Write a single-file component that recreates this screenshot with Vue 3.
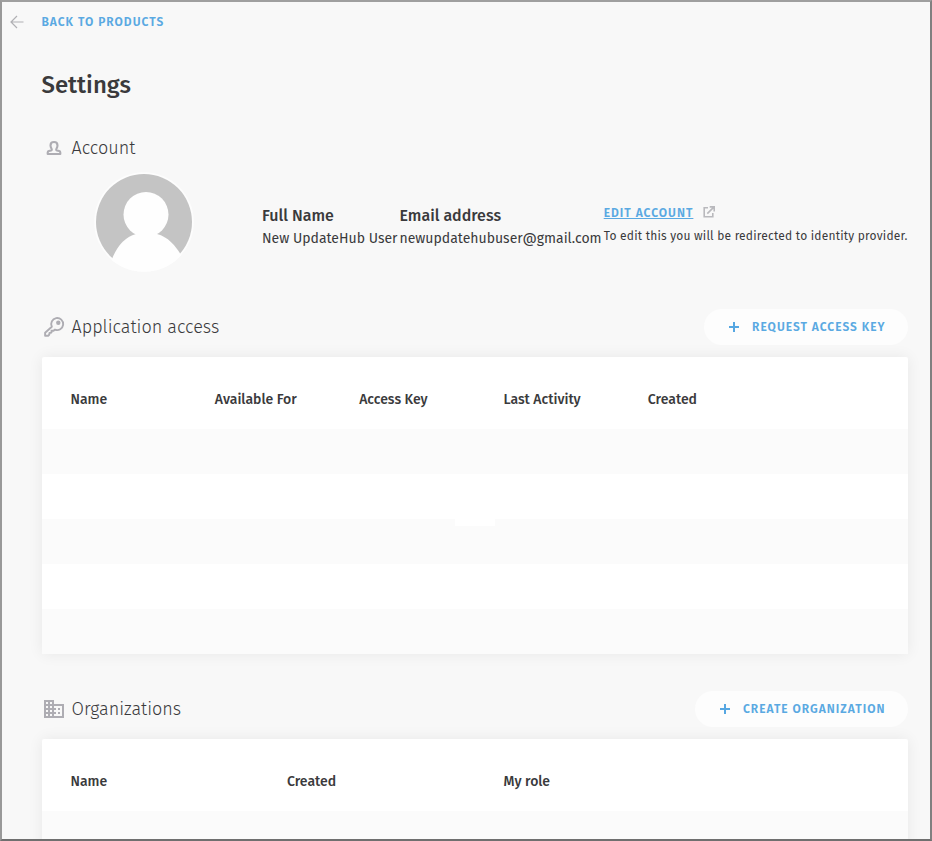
<script setup>
const keyColumns = ['Name', 'Available For', 'Access Key', 'Last Activity', 'Created', '']
const orgColumns = ['Name', 'Created', 'My role', '']
</script>

<template>
  <div class="window">
    <nav class="back">
      <svg class="back-icon" width="14" height="14" viewBox="0 0 14 14">
        <path d="M13.5 7H1M7 1 1 7l6 6" fill="none" stroke="#b0b0b4" stroke-width="1.2" />
      </svg>
      <a class="link">BACK TO PRODUCTS</a>
    </nav>

    <main class="content">
      <h1 class="title">Settings</h1>

      <section class="account">
        <header class="section-head account-head">
          <svg class="section-icon" width="24" height="24" viewBox="0 0 24 24">
            <path
              d="M12 6c2.200 0 3.500 1.400 3.500 3.400 0 1.600-.6 2.600-1.100 3.500-.4.800-.2 1.300.5 1.500l2.300.6c.8.200 1.100.7 1.100 1.400V18H5.700v-1.600c0-.7.3-1.200 1.100-1.400l2.300-.6c.7-.2.9-.7.5-1.500-.5-.9-1.100-1.900-1.100-3.500C8.500 7.400 9.800 6 12 6z"
              fill="none" stroke="#aeadb3" stroke-width="2.100" stroke-linejoin="round"
            />
          </svg>
          <h2>Account</h2>
        </header>
        <div class="profile">
          <svg class="avatar" width="100" height="100" viewBox="0 0 100 100">
            <defs>
              <clipPath id="avatar-clip"><circle cx="50" cy="50" r="49.800" /></clipPath>
            </defs>
            <circle cx="50" cy="50" r="49.800" fill="#fdfdfd" />
            <circle cx="50" cy="50" r="48" fill="#c4c4c4" />
            <g clip-path="url(#avatar-clip)" fill="#fefefe">
              <circle cx="52" cy="42.500" r="22.500" />
              <path d="M42 62h21c11 3 18 11 24 21l2 17H16l2-13c5-13 13-22 24-25z" />
            </g>
          </svg>
          <dl class="field name-field">
            <dt>Full Name</dt>
            <dd>New UpdateHub User</dd>
          </dl>
          <dl class="field email-field">
            <dt>Email address</dt>
            <dd>newupdatehubuser@gmail.com</dd>
          </dl>
          <div class="edit">
            <div class="edit-row">
              <a class="link underlined">EDIT ACCOUNT</a>
              <svg class="external" width="12" height="12" viewBox="0 0 12 12">
                <path d="M5 1.800H1.200v9h8.600V7" fill="none" stroke="#b9b9bd" stroke-width="1.600" />
                <path d="M4.300 7.600l6-6M6.700.9h4.500v4.500" fill="none" stroke="#b9b9bd" stroke-width="1.600" />
              </svg>
            </div>
            <p>To edit this you will be redirected to identity provider.</p>
          </div>
        </div>
      </section>

      <section class="block">
        <header class="section-head">
          <svg class="section-icon" width="24" height="24" viewBox="0 0 24 24">
            <path
              d="M9.800 12.200a6 6 0 1 1 3.100 2.900l-1.300 1.100H9.500v1.900l-2 .4-.3 1.800-1 .9H3.100v-2.900z"
              transform="translate(0 -.5)"
              fill="none" stroke="#aeadb3" stroke-width="1.900" stroke-linejoin="round"
            />
            <circle cx="16.300" cy="7.800" r="2.200" fill="#aeadb3" />
          </svg>
          <h2>Application access</h2>
          <button class="pill">
            <svg width="10" height="10" viewBox="0 0 10 10"><path d="M5 0v10M0 5h10" stroke="#56a7e2" stroke-width="2" /></svg>
            <span>REQUEST ACCESS KEY</span>
          </button>
        </header>
        <div class="card">
          <div class="table-head six">
            <span v-for="(column, i) in keyColumns" :key="i">{{ column }}</span>
          </div>
          <div v-for="n in 5" :key="n" class="row"></div>
          <div class="loader"></div>
        </div>
      </section>

      <section class="block">
        <header class="section-head">
          <svg class="section-icon" width="24" height="24" viewBox="0 0 24 24">
            <path
              d="M12 7V3H2v18h20V7H12zM6 19H4v-2h2v2zm0-4H4v-2h2v2zm0-4H4V9h2v2zm0-4H4V5h2v2zm4 12H8v-2h2v2zm0-4H8v-2h2v2zm0-4H8V9h2v2zm0-4H8V5h2v2zm10 12h-8v-2h2v-2h-2v-2h2v-2h-2V9h8v10zm-2-8h-2v2h2v-2zm0 4h-2v2h2v-2z"
              fill="#aeadb3"
            />
          </svg>
          <h2>Organizations</h2>
          <button class="pill">
            <svg width="10" height="10" viewBox="0 0 10 10"><path d="M5 0v10M0 5h10" stroke="#56a7e2" stroke-width="2" /></svg>
            <span>CREATE ORGANIZATION</span>
          </button>
        </header>
        <div class="card">
          <div class="table-head four">
            <span v-for="(column, i) in orgColumns" :key="i">{{ column }}</span>
          </div>
          <div v-for="n in 5" :key="n" class="row"></div>
        </div>
      </section>
    </main>
  </div>
</template>

<style>
body {
  background: #f8f8f8;
  overflow: hidden;
}
</style>

<style scoped>
.window {
  box-sizing: border-box;
  width: 932px;
  height: 841px;
  overflow: hidden;
  border: 2px solid;
  border-color: #9f9f9f #808080 #6f6f6f #999;
  background: #f8f8f8;
  color: #3a3a3c;
  font-family: "Fira Sans", "Noto Sans", sans-serif;
}
h1, h2, p, dl, dt, dd { margin: 0; }
.back {
  display: flex;
  align-items: center;
  height: 40px;
  padding-left: 8px;
}
.back-icon { margin-right: 17.500px; }
.link {
  color: #5aa9e2;
  font-size: 12px;
  font-weight: 600;
  letter-spacing: 1px;
  line-height: 16px;
}
.content { padding: 0 22px 0 40px; }
.title {
  margin-top: 25px;
  margin-left: -0.5px;
  font-size: 24px;
  font-weight: 500;
  line-height: 36px;
}
.account { margin-top: 33px; }
.section-head {
  display: flex;
  align-items: center;
  height: 36px;
}
.account-head { height: 24px; }
.section-icon { margin-right: 5.500px; }
h2 {
  font-size: 18px;
  font-weight: 300;
  line-height: 24px;
}
.profile {
  display: flex;
  align-items: flex-start;
  margin-top: 12px;
  padding-left: 52px;
  height: 100px;
}
.avatar { flex: none; }
.field { padding-top: 32px; }
.name-field { width: 137.500px; margin-left: 68px; }
.email-field { width: 204.200px; }
dt {
  font-size: 16px;
  font-weight: 500;
  line-height: 24px;
}
dd {
  font-size: 14px;
  line-height: 22px;
  white-space: nowrap;
}
.edit { padding-top: 33px; }
.edit-row {
  display: flex;
  align-items: center;
  gap: 9.500px;
  height: 16px;
}
.external { margin-bottom: 2px; }
.underlined { text-decoration: underline; }
.edit p {
  margin-top: 7px;
  font-size: 12px;
  line-height: 16px;
  letter-spacing: 0.2px;
  white-space: nowrap;
}
.block { margin-top: 37px; }
.pill {
  display: flex;
  align-items: center;
  gap: 13px;
  height: 36px;
  margin-left: auto;
  padding: 0 22.500px 0 25px;
  border: 0;
  border-radius: 18px;
  background: #fdfdfd;
  color: #5aa9e2;
  font: 600 12px/16px "Fira Sans", "Noto Sans", sans-serif;
  letter-spacing: 1px;
}
.card {
  position: relative;
  margin-top: 12px;
  border-radius: 2px;
  background: #fff;
  box-shadow: 0 0 15px rgba(0, 0, 0, 0.07);
}
.table-head {
  display: grid;
  height: 72px;
  box-sizing: border-box;
  padding-top: 33px;
  font-size: 14px;
  font-weight: 500;
  line-height: 20px;
}
.six { grid-template-columns: repeat(6, 1fr); }
.four { grid-template-columns: repeat(4, 1fr); }
.table-head span { padding-left: 28.500px; }
.row { height: 45px; }
.row:nth-child(even) { background: #fbfbfb; }
.loader {
  position: absolute;
  top: 129px;
  left: 413px;
  width: 40px;
  height: 40px;
  background: #fff;
}
</style>
